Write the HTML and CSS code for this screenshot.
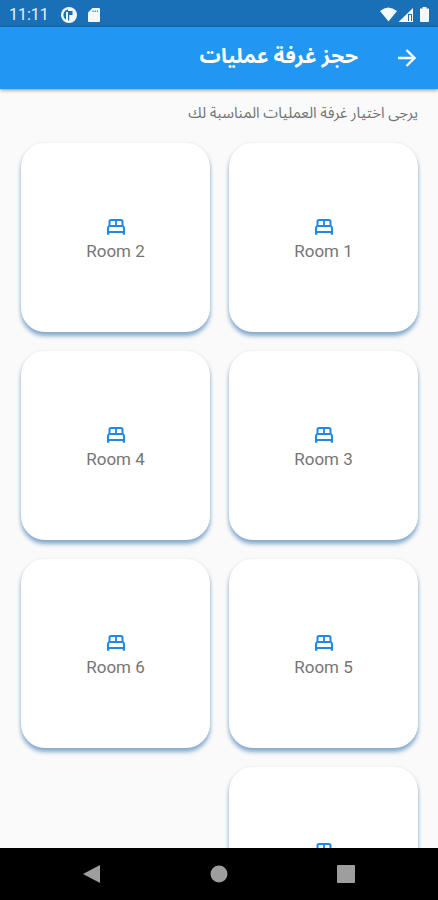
FILE: index.html
```html
<!DOCTYPE html>
<html lang="ar" dir="rtl">
<head>
<meta charset="utf-8">
<meta name="viewport" content="width=device-width, initial-scale=1">
<title>حجز غرفة عمليات</title>
<link rel="stylesheet" href="styles.css">
</head>
<body>
<svg class="defs" aria-hidden="true">
  <symbol id="bed" viewBox="0 0 20 18">
    <path fill-rule="evenodd" d="M17.500 7.500V3.500Q17.500 1 15 1H5Q2.500 1 2.500 3.500v4Q1 8.300 1 10v6.800h2.200V15h13.600v1.800H19V10q0-1.700-1.500-2.500zM10.900 2.900h3.600q1 0 1 1V7h-4.600zM4.500 3.900q0-1 1-1h3.600V7H4.500zM3 12.900V10.200q0-1.200 1.200-1.200h11.600q1.200 0 1.200 1.200v2.700z"/>
  </symbol>
</svg>
<div class="screen">
  <div class="status" dir="ltr">
    <span class="clock">11:11</span>
    <svg class="status-app" viewBox="0 0 16 16" aria-hidden="true"><circle cx="8" cy="8" r="8"/><path class="cut" d="M7 2.500A5.500 5.500 0 0 0 5 12.600V5h2zM8.200 4h3.300v4H8.200v5.500H7V4z"/></svg>
    <svg class="status-card" viewBox="0 0 12 14" aria-hidden="true"><path d="M4.500 0H11a1 1 0 0 1 1 1v12a1 1 0 0 1-1 1H1a1 1 0 0 1-1-1V4.500z"/><path class="cut" d="M4.500 2.500h1v1.500h-1zM6.700 2.500h1v1.500h-1zM8.900 2.500h1v1.500h-1z"/></svg>
    <svg class="status-signal" viewBox="0 0 50 16" aria-hidden="true"><path d="M0 4Q8-3 17 4L8.500 14.500zM33 1v14H18.500z"/><path class="cut" d="M28 7h4v7h-1V8h-2v6h-1z"/><path d="M42.500 0h4v1.500H49V14a1 1 0 0 1-1 1h-7a1 1 0 0 1-1-1V1.500h2.500z"/></svg>
  </div>
  <header class="appbar">
    <button class="back" type="button" aria-label="رجوع"><svg viewBox="0 0 18 18" aria-hidden="true"><path d="M0 9h16M8.500 1l8 8-8 8"/></svg></button>
    <h1>حجز غرفة عمليات</h1>
  </header>
  <main>
    <p class="hint">يرجى اختيار غرفة العمليات المناسبة لك</p>
    <div class="rooms">
      <button class="room" type="button"><svg aria-hidden="true"><use href="#bed"/></svg><span dir="ltr">Room 1</span></button>
      <button class="room" type="button"><svg aria-hidden="true"><use href="#bed"/></svg><span dir="ltr">Room 2</span></button>
      <button class="room" type="button"><svg aria-hidden="true"><use href="#bed"/></svg><span dir="ltr">Room 3</span></button>
      <button class="room" type="button"><svg aria-hidden="true"><use href="#bed"/></svg><span dir="ltr">Room 4</span></button>
      <button class="room" type="button"><svg aria-hidden="true"><use href="#bed"/></svg><span dir="ltr">Room 5</span></button>
      <button class="room" type="button"><svg aria-hidden="true"><use href="#bed"/></svg><span dir="ltr">Room 6</span></button>
      <button class="room" type="button"><svg aria-hidden="true"><use href="#bed"/></svg><span dir="ltr">Room 7</span></button>
    </div>
  </main>
  <nav class="system" dir="ltr">
    <button type="button" aria-label="Back"><svg viewBox="0 0 18 18" aria-hidden="true"><path d="M17 0v18L0 9z"/></svg></button>
    <button type="button" aria-label="Home"><svg viewBox="0 0 18 18" aria-hidden="true"><circle cx="9" cy="9" r="8.500"/></svg></button>
    <button type="button" aria-label="Recent apps"><svg viewBox="0 0 18 18" aria-hidden="true"><rect width="18" height="18" rx="1"/></svg></button>
  </nav>
</div>
</body>
</html>
```
FILE: styles.css
```css
* { box-sizing: border-box; }
body {
  margin: 0;
  background: #fafafa;
  font-family: Roboto, "Noto Sans Arabic", "DejaVu Sans", sans-serif;
}
button {
  border: 0;
  padding: 0;
  background: none;
  font: inherit;
  color: inherit;
}
svg { display: block; }
.defs { display: none; }
.screen {
  display: flex;
  flex-direction: column;
  height: 100vh;
  overflow: hidden;
}
.status {
  flex: none;
  display: flex;
  align-items: center;
  height: 27px;
  padding: 2px 8px 0 9px;
  background: #1a70b7;
  color: #e8f1f8;
  fill: #f4f9fd;
}
.clock { font-size: 16px; line-height: 20px; }
.status .cut { fill: #1a70b7; }
.status-app { width: 16px; height: 16px; margin-left: 12px; }
.status-card { width: 12px; height: 14px; margin-left: 11px; }
.status-signal { width: 50px; height: 16px; margin-left: auto; }
.appbar {
  flex: none;
  display: flex;
  align-items: center;
  gap: 40px;
  height: 62px;
  padding: 0 22px;
  background: #2196f3;
  color: #fff;
  box-shadow: 0 1px 4px rgba(0, 0, 0, .45);
  position: relative;
}
.back svg {
  width: 18px;
  height: 18px;
  fill: none;
  stroke: #fff;
  stroke-width: 2.3;
}
h1 {
  margin: 0;
  padding-bottom: 4px;
  font-size: 21px;
  line-height: 32px;
  font-weight: 700;
}
main {
  flex: 1;
  min-height: 0;
  overflow-y: auto;
  scrollbar-width: none;
  padding: 12px 20px 0 21px;
}
.hint {
  margin: 0 0 18px;
  font-size: 15px;
  line-height: 24px;
  color: #737373;
}
.rooms {
  display: grid;
  grid-template-columns: 1fr 1fr;
  gap: 19px;
}
.room {
  display: flex;
  flex-direction: column;
  align-items: center;
  justify-content: center;
  gap: 4px;
  aspect-ratio: 1;
  padding-top: 4px;
  border-radius: 24px;
  background: #fff;
  box-shadow: 0 4px 4px rgba(60, 125, 180, .6), 0 1px 4px rgba(60, 90, 140, .12);
  font-size: 17px;
  line-height: 22px;
  color: #757575;
}
.room svg { width: 20px; height: 18px; fill: #1e88e5; }
.system {
  flex: none;
  display: flex;
  align-items: center;
  justify-content: space-between;
  height: 52px;
  padding: 0 19%;
  background: #000;
}
.system svg { width: 18px; height: 18px; fill: #9e9e9e; }
```
